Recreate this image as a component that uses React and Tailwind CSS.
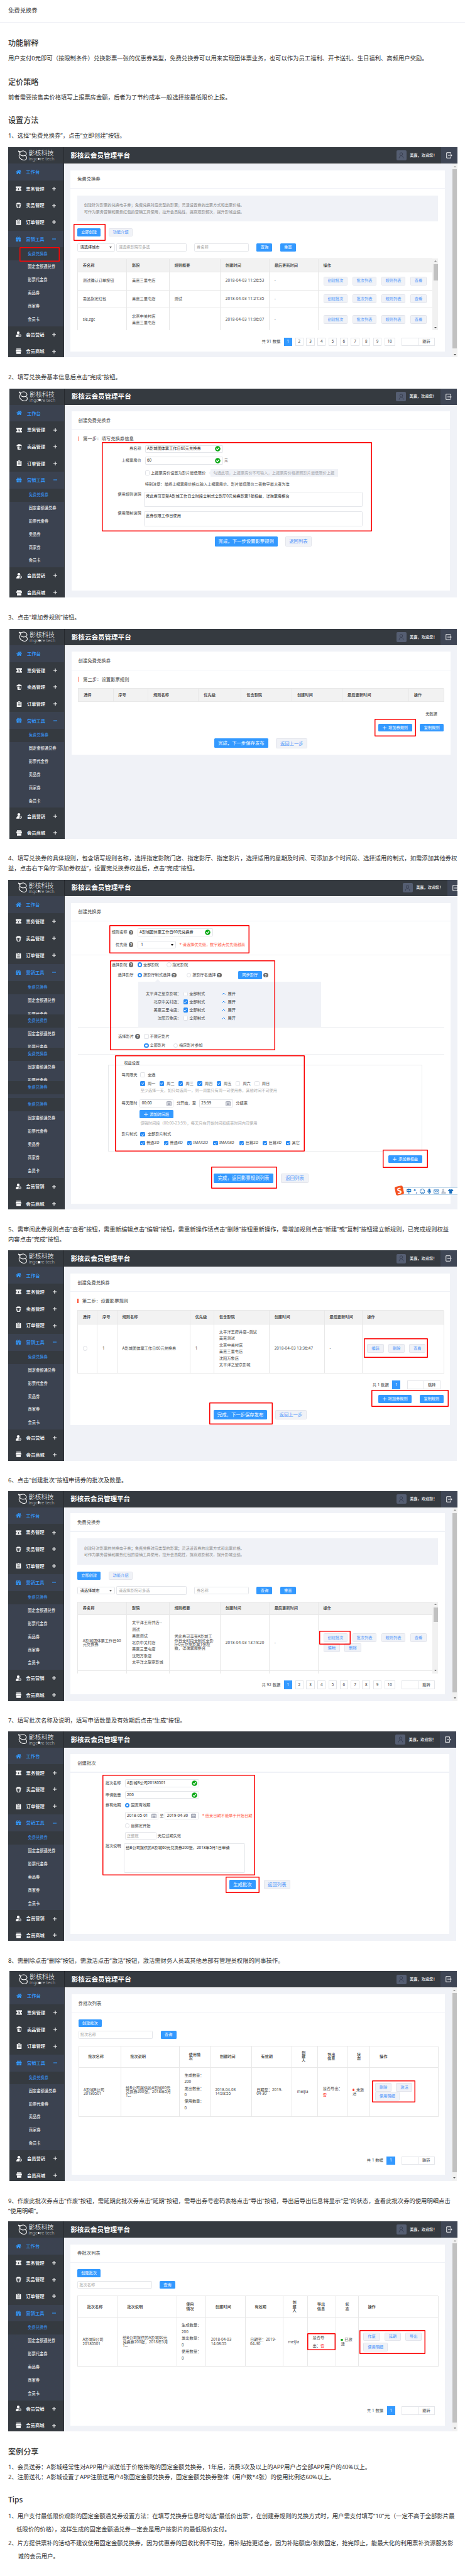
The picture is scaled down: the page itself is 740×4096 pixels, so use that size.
import React from "react";
import clsx from "clsx";
import { FaHome, FaGift, FaMicrophone, FaTshirt, FaRegSmile, FaRegKeyboard } from "react-icons/fa";

/* ---------- icons ---------- */

function TicketIcon() {
  return (
    <svg viewBox="0 0 18 16" className="h-[8px] w-[9px]">
      <path fill="#fff" fillRule="evenodd" d="M0 1h18v4a3 3 0 0 0 0 6v4H0v-4a3 3 0 0 0 0-6z" />
      <path fill="none" stroke="#353a40" strokeWidth="1.4" d="M6.3 4.5 9 8l2.7-3.5M9 8v4.5M6.5 8.5h5M6.5 10.5h5" />
    </svg>
  );
}

function PopcornIcon() {
  return (
    <svg viewBox="0 0 18 18" className="h-[9px] w-[9px]">
      <path fill="#fff" d="M1 6a3 3 0 0 1 3-3.5 3.5 3.5 0 0 1 5-1.5 3.5 3.5 0 0 1 5 1.5A3 3 0 0 1 17 6z" />
      <path fill="none" stroke="#fff" strokeWidth="1.8" d="M2.3 6.5 4.5 17h9l2.2-10.5M7 7v10M11 7v10" />
    </svg>
  );
}

function OrderIcon() {
  return (
    <svg viewBox="0 0 18 18" className="h-[9px] w-[9px]">
      <path fill="#fff" d="M1.5 2h4V.5h7V2h4v16h-15z" />
      <path fill="none" stroke="#353a40" strokeWidth="1.3" d="M5.5 2v2.5h7V2M4.5 8h9M4.5 11h9M4.5 14h9" />
    </svg>
  );
}

function MemberIcon() {
  return (
    <svg viewBox="0 0 18 18" className="h-[9px] w-[9px]">
      <circle cx="8" cy="4.5" r="4.3" fill="#fff" />
      <path fill="#fff" d="M0 17.5C0 12 3 10 5.5 9.5h5C8.5 12 8 15 10 17.5z" />
      <circle cx="13.5" cy="13.3" r="3.6" fill="none" stroke="#fff" strokeWidth="1.7" />
      <path d="m12 13.5 1.2 1.2 2-2.4" fill="none" stroke="#fff" strokeWidth="1.2" />
    </svg>
  );
}

function ShopIcon() {
  return (
    <svg viewBox="0 0 18 18" className="h-[9px] w-[9px]">
      <path fill="#fff" d="M2 .5h14V3H2zM1 4h16l1 4.5H0zM2 10.5h14v7H2z" />
      <path fill="none" stroke="#fff" strokeWidth="1.6" d="M0 8.5q2.2 3 4.5 0 2.2 3 4.5 0 2.2 3 4.5 0 2.2 3 4.5 0" />
    </svg>
  );
}

function LogoMark() {
  return (
    <svg viewBox="0 0 34 36" className="h-[17px] w-[16.5px] shrink-0" fill="none" stroke="#fff" strokeWidth="2.2">
      <path d="M2 2c3 3 6 2 9 1.500C16 1 24 1 28 8c3 5 0 9-5 10C15 20 10 17 8 14" />
      <path d="M2 2c1 3 3 5 6 6M9 7C2 15 3 24 10 29c8 6 19 5 20-3 .5-5-2-8-7-8" />
    </svg>
  );
}

function LogoutIcon() {
  return (
    <svg viewBox="0 0 20 20" className="h-[10px] w-[10px]" fill="none" stroke="#fff" strokeWidth="1.9">
      <path d="M15 5V1.5H1.5v17H15V15M6 10h12M14.5 6l4 4-4 4" />
    </svg>
  );
}

function Check() {
  return (
    <svg viewBox="0 0 20 20" className="h-[9px] w-[9px] shrink-0">
      <circle cx="10" cy="10" r="9.5" fill="#0aa815" />
      <path d="m5 9.8 3.8 4L15.3 6" fill="none" stroke="#fff" strokeWidth="2.8" />
    </svg>
  );
}

function Calendar() {
  return (
    <svg viewBox="0 0 18 18" className="h-[8.5px] w-[8px] shrink-0" fill="none" stroke="#777d92" strokeWidth="1.5">
      <path d="M1 3.5h16V17H1zM1 6h16M5 1v3M9 1v3M13 1v3M5 9v6M9 9v6M13 9v6M3.5 10.5h11M3.5 13.5h11" />
    </svg>
  );
}

function Help({ className }) {
  return (
    <span
      className={clsx(
        "flex h-[7.5px] w-[7.5px] shrink-0 items-center justify-center rounded-full bg-[#6b6b6b] text-[6px] leading-none font-bold text-white",
        className
      )}
    >
      ?
    </span>
  );
}

function Plus() {
  return (
    <svg viewBox="0 0 12 12" className="mr-[2.5px] h-[6.5px] w-[6.5px]" stroke="#fff" strokeWidth="1.8">
      <path d="M6 0v12M0 6h12" />
    </svg>
  );
}

/* ---------- controls ---------- */

function Primary({ className, children }) {
  return (
    <span className={clsx("flex shrink-0 items-center justify-center rounded-[1.5px] bg-[#3399ff] whitespace-nowrap text-white", className)}>
      {children}
    </span>
  );
}

function Ghost({ className, children }) {
  return (
    <span
      className={clsx(
        "flex shrink-0 items-center justify-center rounded-[1.5px] border border-[#e3e5ec] bg-[#f0f2f7] whitespace-nowrap text-[#4a92fb]",
        className
      )}
    >
      {children}
    </span>
  );
}

function Input({ className, children, icon, muted }) {
  return (
    <span
      className={clsx(
        "flex shrink-0 items-center rounded-[1.5px] border border-[#e4e6ea] bg-white pr-[2.5px] pl-[2.3px] whitespace-nowrap",
        muted ? "text-[#a5a5a5]" : "text-[#222]",
        className
      )}
    >
      <span className="flex-1">{children}</span>
      {icon}
    </span>
  );
}

function Radio({ on, className }) {
  return (
    <span
      className={clsx(
        "h-[7.5px] w-[7.5px] shrink-0 rounded-full bg-white",
        on ? "border-[2.4px] border-[#2b8cf5]" : "border border-[#dcdee3]",
        className
      )}
    />
  );
}

function Box({ on, className }) {
  return (
    <span
      className={clsx(
        "flex h-[7.5px] w-[7.5px] shrink-0 items-center justify-center rounded-[1.5px]",
        on ? "bg-[#2b8cf5]" : "border border-[#dfe1e6] bg-white",
        className
      )}
    >
      {on && (
        <svg viewBox="0 0 12 12" className="h-[6px] w-[6px]" fill="none" stroke="#fff" strokeWidth="2">
          <path d="m2 6 3 3 5-6" />
        </svg>
      )}
    </span>
  );
}

function Row({ className, children }) {
  return <div className={clsx("flex h-[12px] items-center whitespace-nowrap", className)}>{children}</div>;
}

function Mark({ className }) {
  return <div className={clsx("pointer-events-none absolute rounded-[1px] shadow-[inset_0_0_0_1.5px_#fb0505]", className)} />;
}

function Scrollbar({ className, thumb }) {
  return (
    <div className={clsx("flex shrink-0 flex-col items-center bg-[#f1f1f1]", className)}>
      <div className="flex h-[9px] items-center">
        <span className="border-x-[2px] border-b-[2.5px] border-x-transparent border-b-[#8b8b8b]" />
      </div>
      <div className={clsx("w-[7px] bg-[#c1c1c1]", thumb)} />
      <div className="flex-1" />
      <div className="flex h-[9px] items-center">
        <span className="border-x-[2px] border-t-[2.5px] border-x-transparent border-t-[#505050]" />
      </div>
    </div>
  );
}

function Pager({ total, pages, className }) {
  return (
    <div className={clsx("flex h-[13.6px] items-center justify-end text-[#444]", className)}>
      <span className="mr-[5.5px] tracking-[0.1px]">共 {total} 数据</span>
      {pages.map((p, i) => (
        <span
          key={p}
          className={clsx(
            "mr-[4.6px] flex h-[13.6px] items-center justify-center",
            p === 10 ? "w-[17px]" : "w-[13.2px]",
            i === 0 ? "bg-[#3399ff] text-white" : "border border-[#e4e6ea]"
          )}
        >
          {p}
        </span>
      ))}
      <span className="ml-[5.6px] h-[13.6px] w-[27px] border border-[#e4e6ea]" />
      <span className="flex h-[13.6px] w-[26px] items-center justify-center border border-l-0 border-[#e4e6ea]">跳转</span>
    </div>
  );
}

/* ---------- console frame ---------- */

function MenuItem({ icon, label, sign, active, className }) {
  return (
    <div className={clsx("flex items-center", active ? "bg-[#3b4250] text-[#3399ff]" : "bg-[#353a40] text-white", className)}>
      <span className="ml-[11.5px] flex w-[9px] justify-center">{icon}</span>
      <span className="ml-[7.8px] w-[42px] text-[7.3px] font-medium whitespace-nowrap">{label}</span>
      {sign && (
        <svg viewBox="0 0 12 12" className="h-[6px] w-[6px]" stroke="currentColor" strokeWidth="2.2">
          <path d={sign === "+" ? "M6 0v12M0 6h12" : "M0 6h12"} />
        </svg>
      )}
    </div>
  );
}

function SubItem({ label, active, row, clip }) {
  return (
    <div className={clsx("overflow-hidden", clip ? "h-[10.6px]" : row)}>
      <div className={clsx("flex items-center pl-[31.2px] text-[6.25px] whitespace-nowrap", row, active ? "bg-[#353a40] text-[#3a96f8]" : "bg-[#3b4250] text-white")}>
        {label}
      </div>
    </div>
  );
}

const SUBS = ["免费兑换券", "固定金额通兑券", "影票代金券", "卖品券", "商家券", "会员卡"];

function Sidebar({ stitched }) {
  const item = stitched ? "h-[27.05px]" : "h-[26.65px]";
  const sub = stitched ? "h-[21.2px]" : "h-[20.9px]";
  return (
    <nav className={clsx("shrink-0 border-r border-[#2b2f35] bg-[#353a40]", stitched ? "w-[90px]" : "w-[88.7px]")}>
      <MenuItem className={item} active label="工作台" icon={<FaHome className="h-[9px] w-[9px]" />} />
      <MenuItem className={item} label="票务管理" sign="+" icon={<TicketIcon />} />
      <MenuItem className={item} label="卖品管理" sign="+" icon={<PopcornIcon />} />
      <MenuItem className={item} label="订单管理" sign="+" icon={<OrderIcon />} />
      <MenuItem className={item} active label="营销工具" sign="-" icon={<FaGift className="h-[8.5px] w-[8.5px]" />} />
      {stitched && (
        <>
          {[0, 1, 2].map((n) => (
            <div key={n}>
              <SubItem row={sub} active label={SUBS[0]} />
              <SubItem row={sub} label={SUBS[1]} />
              <SubItem row={sub} clip label={SUBS[2]} />
            </div>
          ))}
          <SubItem row={sub} active label={SUBS[0]} />
          <div className="h-[6.2px] bg-[#3b4250]" />
        </>
      )}
      {SUBS.map((s, i) => (
        <SubItem key={s} row={sub} active={i === 0} label={s} />
      ))}
      <MenuItem className={item} label="会员营销" sign="+" icon={<MemberIcon />} />
      <MenuItem className={item} label="会员商城" sign="+" icon={<ShopIcon />} />
    </nav>
  );
}

function Console({ className, title, card, top = "pt-[9.5px]", scroll, stitched, marks, children }) {
  return (
    <div className={clsx("relative flex flex-col overflow-hidden bg-[#f0f2f7] text-[6.23px] leading-[10.45px] text-[#444]", className)}>
      <header className={clsx("flex h-[26px] shrink-0 items-center bg-[#353a40] text-white", stitched && "w-[724.5px]")}>
        <div className={clsx("flex h-[26px] shrink-0 items-center border-r border-[#25282d] pl-[14.5px]", stitched ? "w-[90px]" : "w-[88.7px]")}>
          <LogoMark />
          <div className="ml-[1.5px] flex flex-col">
            <span className="text-[10px] leading-[10px] font-light whitespace-nowrap">影核科技</span>
            <span className="flex items-center text-[7.3px] leading-[8px] font-light whitespace-nowrap text-[#c2c4c8]">
              ingc
              <i className="mx-[0.3px] mt-[1px] h-[3.6px] w-[3.6px] rounded-full bg-white" />
              re tech
            </span>
          </div>
        </div>
        <h4 className="ml-[10.5px] text-[10.55px] font-bold whitespace-nowrap">影核云会员管理平台</h4>
        <div className="flex-1" />
        <div className="mr-[5.5px] flex h-[15.5px] w-[15.6px] items-center justify-center rounded-[2px] bg-[#555e72]">
          <svg viewBox="0 0 16 18" className="h-[10px] w-[9px]" fill="none" stroke="#343a4b" strokeWidth="1.5">
            <circle cx="8" cy="5.5" r="4" />
            <path d="M2 17c0-9 12-9 12 0" />
          </svg>
        </div>
        <span className="mr-[6px] text-[6.2px] font-medium whitespace-nowrap">美嘉，欢迎您！</span>
        <div className="flex h-[26px] w-[26px] shrink-0 items-center justify-center bg-[#3f4655]">
          <LogoutIcon />
        </div>
      </header>
      <div className="flex min-h-0 flex-1">
        <Sidebar stitched={stitched} />
        <main className={clsx("min-w-0 flex-1 border-t border-white pl-[10.4px]", top)}>
          <section className={clsx("overflow-hidden bg-white", card)}>
            <h5 className="flex h-[28.2px] items-center pl-[10.9px] text-[7.35px]">{title}</h5>
            <div className="h-[1.2px] bg-[#f0f2f7]" />
            {children}
          </section>
        </main>
        {scroll && <Scrollbar className="w-[8px]" thumb="flex-[60]" />}
      </div>
      {marks}
    </div>
  );
}

function StepTitle({ children }) {
  return (
    <div className="mt-[8.2px] flex h-[12px] items-center pl-[10.9px] text-[7.35px]">
      <span className="mr-[6px] h-[7.5px] w-[1.5px] bg-[#ff4a2a]" />
      {children}
    </div>
  );
}

/* ---------- coupon list ---------- */

const LIST_COLS = "grid grid-cols-[78.3px_67.5px_81.2px_77.9px_77.9px_182.6px]";

function Cell({ children, className }) {
  return <div className={clsx("flex min-w-0 items-center border-r border-b border-[#e8e8e8] pl-[7.8px]", className)}>{children}</div>;
}

function CouponList({ total, thumb, children }) {
  return (
    <div className="px-[10.9px]">
      <div className="mt-[10.6px] h-[41.8px] bg-[#f0f2f7] pt-[10.8px] pl-[10.9px] text-[#888]">
        <p className="whitespace-nowrap">创建针对影票的兑换电子券；免费兑换对应类型的影票；灵活设置券的出票方式和出票价格。</p>
        <p className="whitespace-nowrap">可作为票务营销和票务红包的营销工具使用，拉升会员黏性，提高观影频次，提升影城业绩。</p>
      </div>
      <div className="mt-[10.8px] flex h-[13px] items-center gap-[12.7px]">
        <Primary className="h-[12.7px] w-[37.3px]">立即创建</Primary>
        <Ghost className="h-[13.5px] w-[38.2px]">功能介绍</Ghost>
      </div>
      <div className="mt-[10.6px] flex h-[13.2px] items-center">
        <Input className="h-[12.7px] w-[60px] pl-[3.5px]" icon={<span className="mr-[1px] border-x-[2px] border-t-[3px] border-x-transparent border-t-[#666]" />}>
          请选择城市
        </Input>
        <Input className="ml-[2.4px] h-[13.3px] w-[111.8px]" muted>请选择影院可多选</Input>
        <Input className="ml-[11.8px] h-[12.7px] w-[86.8px] pl-[3px]" muted>券名称</Input>
        <Primary className="ml-[12.7px] h-[12.7px] w-[25px]">查询</Primary>
        <Primary className="ml-[12.3px] h-[12.7px] w-[25px]">重置</Primary>
      </div>
      <div className="mt-[10.9px] flex h-[114.2px] overflow-hidden">
        <div className="w-[565.4px] shrink-0 overflow-hidden border-l border-[#e8e8e8]">
          <div className={clsx(LIST_COLS, "h-[21.8px] border-t border-[#e8e8e8] bg-[#f2f2f2] font-medium text-[#333]")}>
            {["券名称", "影院", "规则概要", "创建时间", "最后更新时间", "操作"].map((t) => (
              <Cell key={t}>{t}</Cell>
            ))}
          </div>
          {children}
        </div>
        <Scrollbar className="w-[9.4px]" thumb={thumb} />
      </div>
      <Pager className="mt-[11.5px] pr-[5.2px]" total={total} pages={[1, 2, 3, 4, 5, 6, 7, 8, 9, 10]} />
    </div>
  );
}

function ListActions({ extra }) {
  return (
    <div className="flex flex-wrap gap-x-[7.4px] gap-y-[2.3px]">
      {["创建批次", "批次列表", "规则列表"].map((t) => (
        <Ghost key={t} className="h-[14px] w-[38.7px]">{t}</Ghost>
      ))}
      <Ghost className="h-[14px] w-[26.4px]">查看</Ghost>
      {extra && (
        <>
          <Ghost className="h-[14px] w-[26.4px]">编辑</Ghost>
          <Ghost className="h-[14px] w-[26.4px]">删除</Ghost>
        </>
      )}
    </div>
  );
}

function ListRow({ name, cinemas, summary, time, className, extra }) {
  return (
    <div className={clsx(LIST_COLS, className)}>
      <Cell className="leading-[6.3px] whitespace-nowrap">{name}</Cell>
      <Cell>
        <div>
          {cinemas.map((c) => (
            <p key={c} className="whitespace-nowrap">{c}</p>
          ))}
        </div>
      </Cell>
      <Cell className="leading-[6.3px] whitespace-nowrap">{summary}</Cell>
      <Cell className="tracking-[0.15px] whitespace-nowrap">{time}</Cell>
      <Cell>-</Cell>
      <Cell>
        <ListActions extra={extra} />
      </Cell>
    </div>
  );
}

/* ---------- batch list ---------- */

function BatchList({ cols, heads, cells }) {
  return (
    <div className="px-[10.9px]">
      <Primary className="mt-[10.4px] h-[12.5px] w-[37.3px]">创建批次</Primary>
      <div className="mt-[6.1px] flex items-center gap-[12.4px]">
        <Input className="h-[12.5px] w-[118.6px]" muted>批次名称</Input>
        <Primary className="h-[12.5px] w-[25px]">查询</Primary>
      </div>
      <div className={clsx("mt-[10.8px] grid grid-rows-[34px_78px] border-t border-l border-[#e8e8e8]", cols)}>
        {heads.map((h, i) => (
          <div key={i} className="flex items-center border-r border-b border-[#e8e8e8] pl-[14.6px] leading-[6.3px] font-medium whitespace-pre text-[#333]">
            {h}
          </div>
        ))}
        {cells.map((c, i) => (
          <div key={i} className="flex min-w-0 items-center border-r border-b border-[#e8e8e8] pl-[7.5px] leading-[6.3px] whitespace-pre">
            {c}
          </div>
        ))}
      </div>
      <Pager className="mt-[63px] pr-[5.2px]" total={1} pages={[1]} />
    </div>
  );
}

function Status({ dot, first, rest }) {
  return (
    <div>
      <div className="flex items-center">
        <i className={clsx("mr-[2.5px] h-[3.4px] w-[3.4px] rounded-full", dot)} />
        {first}
      </div>
      <div>{rest}</div>
    </div>
  );
}

const USAGE = (
  <div className="leading-[10.4px]">
    生成数量：{"\n"}200{"\n"}发出数量：{"\n"}0{"\n"}使用数量：{"\n"}0
  </div>
);

/* ---------- article ---------- */

function Heading({ className, children }) {
  return <h2 className={clsx("flex h-[20px] items-center text-[12.1px] font-medium text-[#333]", className)}>{children}</h2>;
}

function Text({ className, children }) {
  return <p className={clsx("text-[9.34px] leading-[16px] whitespace-pre text-[#333]", className)}>{children}</p>;
}

export default function App() {
  return (
    <div className="h-[4096px] w-[740px] overflow-hidden bg-white font-['Noto_Sans','Noto_Sans_CJK_SC',sans-serif]">
      <div className="flex h-[36px] items-center border-b border-[#eef0f6] pl-[13px] text-[9.34px] text-[#333]">免费兑换券</div>
      <div className="pl-[13px]">
        <Heading className="mt-[22.7px]">功能解释</Heading>
        <Text className="mt-[6.2px]">用户支付0元即可（按限制条件）兑换影票一张的优惠券类型，免费兑换券可以用来实现团体票业务，也可以作为员工福利、开卡送礼、生日福利、高频用户奖励。</Text>
        <Heading className="mt-[19.9px]">定价策略</Heading>
        <Text className="mt-[6.4px]">前者需要按售卖价格填写上报票房金额，后者为了节约成本一般选择按最低限价上报。</Text>
        <Heading className="mt-[18.9px]">设置方法</Heading>
        <Text className="mt-[6.3px]">1、选择“免费兑换券”，点击“立即创建”按钮。</Text>

        <Console
          className="mt-[9.75px] h-[334px] w-[714.5px]"
          title="免费兑换券"
          card="h-[288px] w-[596px]"
          scroll
          marks={
            <>
              <Mark className="top-[159.4px] left-[18px] h-[23px] w-[64px]" />
              <Mark className="top-[121.9px] left-[104.3px] h-[27.5px] w-[50.5px]" />
            </>
          }
        >
          <CouponList total={91} thumb="h-[26.5px]">
            <ListRow className="h-[28.9px]" name="测试确认订单按钮" cinemas={["美嘉三里屯店"]} time="2018-04-03 11:26:53" />
            <ListRow className="h-[28.7px]" name="卖品指定红包" cinemas={["美嘉三里屯店"]} summary="测试" time="2018-04-03 11:21:35" />
            <ListRow className="h-[36.5px]" name="sle,zgc" cinemas={["北京中关村店", "美嘉三里屯店"]} time="2018-04-03 11:06:07" />
          </CouponList>
        </Console>

        <Text className="mt-[23.6px]">2、填写兑换券基本信息后点击“完成”按钮。</Text>
        <Console
          className="mt-[9.9px] ml-[1.6px] h-[332.6px] w-[712.2px]"
          title="创建免费兑换券"
          card="h-[284.5px] w-[602.2px]"
          marks={<Mark className="top-[85.5px] left-[147.2px] h-[142px] w-[430.4px]" />}
        >
          <StepTitle>第一步：填写兑换券信息</StepTitle>
          <Row className="mt-[4px]">
            <span className="mr-[6px] w-[111px] text-right">券名称</span>
            <Input className="h-[12.2px] w-[124.1px]" icon={<Check />}>A影城团体票工作日60元兑换券</Input>
          </Row>
          <Row className="mt-[6.8px]">
            <span className="mr-[6px] w-[111px] text-right">上报票房价</span>
            <Input className="h-[12.2px] w-[124.1px]" icon={<Check />}>60</Input>
            <span className="ml-[2px]">元</span>
          </Row>
          <Row className="mt-[7.8px] pl-[117px]">
            <Box />
            <span className="ml-[1.9px]">上报票房价设置为影片最低限价</span>
            <span className="ml-[5px] border-y-[3px] border-r-[3px] border-y-transparent border-r-[#f0f2f7]" />
            <span className="flex h-[12.4px] w-[202.5px] items-center bg-[#f0f2f7] pl-[4.3px] text-[#a3a6ad]">勾选此项，上报票房价不可输入，上报票房价格按照影片最低限价上报</span>
          </Row>
          <Row className="mt-[5.6px] pl-[117px]">特别注意：最终上报票房价格以输入上报票房价、影片最低限价二者数字最大者为准</Row>
          <div className="mt-[6.3px] flex">
            <span className="mt-[-1.5px] mr-[4px] w-[111px] text-right">使用规则说明</span>
            <div className="h-[23.8px] w-[348.3px] rounded-[1.5px] border border-[#e4e6ea] pt-[1px] pl-[2.3px] text-[#222]">凭此券可享受A影城工作日全时段全制式全影厅0元兑换影票1张权益，详询票房柜台</div>
          </div>
          <div className="mt-[7px] flex">
            <span className="mt-[-1.5px] mr-[4px] w-[111px] text-right">使用限制说明</span>
            <div className="h-[23.8px] w-[348.3px] rounded-[1.5px] border border-[#e4e6ea] pt-[1px] pl-[2.3px] text-[#222]">此券仅限工作日使用</div>
          </div>
          <div className="mt-[16.2px] flex gap-[12px] pl-[228px] text-[7.35px]">
            <Primary className="h-[15.6px] w-[100px]">完成，下一步设置影票规则</Primary>
            <Ghost className="h-[15.6px] w-[42.5px]">返回列表</Ghost>
          </div>
        </Console>

        <Text className="mt-[24px]">3、点击“增加券规则”按钮。</Text>
        <Console
          className="mt-[9.7px] ml-[1.6px] h-[333.8px] w-[712.8px]"
          title="创建免费兑换券"
          card="h-[163.6px] w-[603.2px]"
          marks={<Mark className="top-[143.5px] left-[581px] h-[27.5px] w-[66.5px]" />}
        >
          <StepTitle>第二步：设置影票规则</StepTitle>
          <div className="px-[10.7px]">
            <div className="mt-[8.3px] grid h-[21.6px] grid-cols-[55.2px_55.7px_80.2px_68px_80.7px_80.2px_105.7px_56px] border-t border-l border-[#e8e8e8] bg-[#f2f2f2] font-medium text-[#333]">
              {["选择", "序号", "规则名称", "优先级", "包含影院", "创建时间", "最后更新时间", "操作"].map((t) => (
                <Cell key={t}>{t}</Cell>
              ))}
            </div>
            <Row className="mt-[13px] justify-end pr-[10.4px]">无数据</Row>
            <div className="mt-[9.8px] flex justify-end gap-[12.7px]">
              <Primary className="h-[12.8px] w-[53.3px]"><Plus />增加券规则</Primary>
              <Primary className="h-[12.8px] w-[37.8px]">复制规则</Primary>
            </div>
          </div>
          <div className="mt-[10.6px] flex gap-[12.7px] pl-[227.5px] text-[7.35px]">
            <Primary className="h-[15.4px] w-[85.4px]">完成，下一步保存发布</Primary>
            <Ghost className="h-[15.6px] w-[50px]">返回上一步</Ghost>
          </div>
        </Console>

        <Text className="mt-[23.2px]">{"4、填写兑换券的具体规则，包含填写规则名称，选择指定影院门店、指定影厅、指定影片，选择适用的星期及时间、可添加多个时间段、选择适用的制式，如需添加其他券权\n益，点击右下角的“添加券权益”，设置完兑换券权益后，点击“完成”按钮。"}</Text>
        <Console
          className="mt-[9.7px] h-[524.9px] w-[714.5px]"
          title="创建兑换券"
          card="h-[478.2px] w-[604px]"
          top="pt-[10px]"
          stitched
          marks={
            <>
              <Mark className="top-[72.1px] left-[160.5px] h-[45.4px] w-[223.7px]" />
              <Mark className="top-[128px] left-[161.9px] h-[143.8px] w-[262.9px]" />
              <Mark className="top-[279.2px] left-[169.9px] h-[153.3px] w-[302px]" />
              <Mark className="top-[429.9px] left-[596.1px] h-[28.9px] w-[72.2px]" />
              <Mark className="top-[456.6px] left-[323.3px] h-[35.1px] w-[104.8px]" />
              <div className="absolute top-[489.5px] left-[626px] flex h-[12px] w-[100px] items-center gap-[3.6px] border-y border-[#b9d3e8] bg-white pl-[7.5px] text-[#1b6fbe]">
                <span className="text-[8.2px] leading-none font-bold">中</span>
                <span className="text-[8px] leading-none font-bold">°,</span>
                <FaRegSmile className="h-[8.5px] w-[8.5px] shrink-0" />
                <FaMicrophone className="h-[8.5px] w-[6.5px] shrink-0" />
                <FaRegKeyboard className="h-[9px] w-[9px] shrink-0" />
                <svg viewBox="0 0 16 18" className="h-[8.5px] w-[7.5px] shrink-0" fill="#b7bfcc">
                  <circle cx="7" cy="4" r="3.5" />
                  <path d="M1 17c0-8 3-9 6-9s4 1 4.5 2H9v7zM10 11h6v7h-6z" />
                </svg>
                <FaTshirt className="h-[8.5px] w-[8.5px] shrink-0" />
              </div>
              <div className="absolute top-[487.5px] left-[616px] flex h-[14px] w-[13px] -rotate-12 items-center justify-center rounded-[2.5px] bg-[#f4511e] text-[13px] leading-none font-bold text-white">S</div>
            </>
          }
        >
          <Row className="mt-[11.8px]">
            <span className="w-[89.2px] text-right">规则名称</span>
            <Help className="ml-[2.4px]" />
            <Input className="ml-[6.2px] h-[12.6px] w-[120.3px]" icon={<Check />}>A影城团体票工作日60元兑换券</Input>
          </Row>
          <Row className="mt-[7.4px]">
            <span className="w-[89.2px] text-right">优先级</span>
            <Help className="ml-[2.4px]" />
            <Input className="ml-[6.2px] h-[12.6px] w-[60.9px] pl-[4.5px]" icon={<span className="border-x-[2px] border-t-[3.5px] border-x-transparent border-t-black" />}>1</Input>
            <span className="ml-[6px] text-[#ff5a46]">* 请选择优先级，数字越大优先级越高</span>
          </Row>
          <div className="mt-[10.2px] h-px bg-[#f0f1f4]" />
          <Row className="mt-[8.5px]">
            <span className="w-[89.2px] text-right">选择影院</span>
            <Help className="ml-[2.4px]" />
            <Radio on className="ml-[6.2px]" />
            <span className="ml-[1.8px]">全部影院</span>
            <Radio className="ml-[12.2px]" />
            <span className="ml-[1.8px]">指定影院</span>
          </Row>
          <Row className="mt-[4.8px]">
            <span className="w-[99.1px] text-right">选择影厅</span>
            <Radio on className="ml-[6.2px]" />
            <span className="ml-[1.8px]">按影厅制式选择</span>
            <Help className="ml-[1.7px]" />
            <Radio className="ml-[16px]" />
            <span className="ml-[2px]">按影厅名选择</span>
            <Help className="ml-[1.5px]" />
            <Primary className="ml-[26.3px] h-[13px] w-[37.8px]">同步影厅</Primary>
            <Help className="ml-[2.5px]" />
          </Row>
          <div className="pl-[134px]">
            <div className="h-[4px] w-[8px] border-x-[4px] border-b-[4px] border-x-transparent border-b-[#f0f2f7]" />
          </div>
          <div className="ml-[106.2px] h-[72px] w-[291.7px] bg-[#f0f2f7] pt-[13.4px]">
            {[
              ["太平洋之望京影城", false],
              ["北京中关村店", true],
              ["美嘉三里屯店", true],
              ["沈阳万象店", false],
            ].map(([name, on]) => (
              <div key={name} className="flex h-[12.8px] items-center whitespace-nowrap">
                <span className="w-[68.5px] text-right">{name}：</span>
                <Box on={on} className="ml-[3.5px]" />
                <span className="ml-[2.2px] w-[52px]">全部制式</span>
                <svg viewBox="0 0 12 8" className="h-[4px] w-[6px]" fill="none" stroke="#2b8cf5" strokeWidth="2">
                  <path d="m1 7 5-5 5 5" />
                </svg>
                <span className="ml-[3.3px]">展开</span>
              </div>
            ))}
          </div>
          <div className="mx-[10.9px] h-px bg-[#eff0f3]" />
          <Row className="mt-[8.5px]">
            <span className="w-[99.6px] text-right">选择影片</span>
            <Help className="ml-[2.4px]" />
            <Box className="ml-[6.2px]" />
            <span className="ml-[2px]">不限定影片</span>
          </Row>
          <Row className="mt-[2.4px] pl-[115.7px]">
            <Radio on />
            <span className="ml-[2px]">全部影片</span>
            <Radio className="ml-[12.2px]" />
            <span className="ml-[2px]">指定影片参加</span>
          </Row>
          <div className="mx-[10.9px] mt-[7.5px] h-px bg-[#eff0f3]" />
          <Row className="mt-[7.7px] pl-[84px]">权益设置</Row>
          <div className="mt-[-3.2px] ml-[59px] h-[138px] w-[499.8px] border border-[#e8eaec]">
            <Row className="mt-[8.3px]">
              <span className="w-[45px] text-right">每周限天</span>
              <Box className="ml-[5px]" />
              <span className="ml-[4px]">全选</span>
            </Row>
            <Row className="mt-[2px] pl-[50px]">
              {["周一", "周二", "周三", "周四", "周五", "周六", "周日"].map((d, i) => (
                <span key={d} className="flex w-[30.3px] items-center">
                  <Box on={i < 5} />
                  <span className="ml-[4px]">{d}</span>
                </span>
              ))}
            </Row>
            <Row className="mt-[-0.5px] pl-[50px] text-[#aaa]">至少选择一天，如只勾选周一，则一周里只有周一可使用券，其他时间不可使用</Row>
            <Row className="mt-[8px]">
              <span className="mr-[4px] w-[45px] text-right">每天限时</span>
              <Input className="h-[12.5px] w-[53.8px]" icon={<Calendar />}>00:00</Input>
              <span className="ml-[4.7px] w-[36px]">分开始，至</span>
              <Input className="h-[12.5px] w-[53.8px]" icon={<Calendar />}>23:59</Input>
              <span className="ml-[4.7px]">分结束</span>
            </Row>
            <Primary className="mt-[5.2px] ml-[49px] h-[12.8px] w-[53.8px]"><Plus />添加时间段</Primary>
            <Row className="mt-[1.8px] pl-[50px] text-[#aaa]">促销时间段（00:00-23:59），每天只在开始时间和结束时间内可使用</Row>
            <Row className="mt-[5.5px]">
              <span className="w-[45px] text-right">影片制式</span>
              <Box on className="ml-[5px]" />
              <span className="ml-[4px]">全部影片制式</span>
            </Row>
            <Row className="mt-[2px] pl-[50px]">
              {[
                ["普通2D", "w-[37.3px]"],
                ["普通3D", "w-[37.3px]"],
                ["IMAX2D", "w-[41.5px]"],
                ["IMAX3D", "w-[41.5px]"],
                ["巨幕2D", "w-[37px]"],
                ["巨幕3D", "w-[37px]"],
                ["其它", "w-[30px]"],
              ].map(([t, w]) => (
                <span key={t} className={clsx("flex shrink-0 items-center", w)}>
                  <Box on />
                  <span className="ml-[2px]">{t}</span>
                </span>
              ))}
            </Row>
          </div>
          <div className="mt-[5.5px] flex w-[558.8px] justify-end">
            <Primary className="h-[12.5px] w-[54.3px]"><Plus />添加券权益</Primary>
          </div>
          <div className="mt-[16.4px] flex gap-[12.3px] pl-[227px] text-[7.45px]">
            <Primary className="h-[15.4px] w-[94.4px]">完成，返回影票规则列表</Primary>
            <Ghost className="h-[15.6px] w-[43.9px]">返回列表</Ghost>
          </div>
        </Console>

        <Text className="mt-[23.8px]">{"5、需审阅此券规则点击“查看”按钮，需重新编辑点击“编辑”按钮，需重新操作请点击“删除”按钮重新操作，需增加规则点击“新建”或“复制”按钮建立新规则，已完成规则权益\n内容点击“完成”按钮。"}</Text>
        <Console
          className="mt-[9.2px] ml-[0.3px] h-[334.2px] w-[714px]"
          title="创建免费兑换券"
          card="h-[241.5px] w-[604.1px]"
          marks={
            <>
              <Mark className="top-[139.9px] left-[565.4px] h-[30.9px] w-[102.4px]" />
              <Mark className="top-[221.1px] left-[577.7px] h-[27.3px] w-[122.7px]" />
              <Mark className="top-[241.7px] left-[319.5px] h-[35px] w-[101.5px]" />
            </>
          }
        >
          <StepTitle>第二步：设置影票规则</StepTitle>
          <div className="px-[10.7px]">
            <div className="mt-[8.3px] grid grid-cols-[31.1px_31.6px_116.1px_38.2px_87.8px_87.8px_59.9px_130px] grid-rows-[21.9px_78.1px] border-t border-l border-[#e8e8e8]">
              {["选择", "序号", "规则名称", "优先级", "包含影院", "创建时间", "最后更新时间", "操作"].map((t) => (
                <Cell key={t} className="bg-[#f2f2f2] font-medium whitespace-nowrap text-[#333]">{t}</Cell>
              ))}
              <Cell><Radio /></Cell>
              <Cell>1</Cell>
              <Cell className="whitespace-nowrap">A影城团体票工作日60元兑换券</Cell>
              <Cell>1</Cell>
              <Cell className="whitespace-pre">{"太平洋王府井店--测试\n美嘉测试\n北京中关村店\n美嘉三里屯店\n沈阳万象店\n太平洋之望京影城"}</Cell>
              <Cell className="tracking-[0.15px] whitespace-nowrap">2018-04-03 13:36:47</Cell>
              <Cell>-</Cell>
              <Cell className="gap-[7px]">
                {["编辑", "删除", "查看"].map((t) => (
                  <Ghost key={t} className="h-[13.9px] w-[26.4px]">{t}</Ghost>
                ))}
              </Cell>
            </div>
            <Pager className="mt-[11.5px] pr-[5.2px]" total={1} pages={[1]} />
            <div className="mt-[9.3px] flex justify-end gap-[12.7px]">
              <Primary className="h-[12.8px] w-[53.3px]"><Plus />增加券规则</Primary>
              <Primary className="h-[12.8px] w-[37.8px]">复制规则</Primary>
            </div>
          </div>
          <div className="mt-[10.7px] flex gap-[12.7px] pl-[227.5px] text-[7.35px]">
            <Primary className="h-[15.4px] w-[85.4px]">完成，下一步保存发布</Primary>
            <Ghost className="h-[15.6px] w-[50px]">返回上一步</Ghost>
          </div>
        </Console>

        <Text className="mt-[23.7px]">6、点击“创建批次”按钮申请券的批次及数量。</Text>
        <Console
          className="mt-[8.3px] h-[334.1px] w-[714.5px]"
          title="免费兑换券"
          card="h-[288px] w-[596px]"
          top="pt-[8.7px]"
          scroll
          marks={<Mark className="top-[222.3px] left-[494.6px] h-[22px] w-[50px]" />}
        >
          <CouponList total={92} thumb="h-[23.7px]">
            <ListRow
              className="h-[88.3px]"
              name={<>A影城团体票工作日60<br />元兑换券</>}
              cinemas={["太平洋王府井店--", "测试", "美嘉测试", "北京中关村店", "美嘉三里屯店", "沈阳万象店", "太平洋之望京影城"]}
              summary={<>凭此券可享受A影城工<br />作日全时段全制式全影<br />厅0元兑换影票1张权<br />益，详询票房柜台</>}
              time="2018-04-03 13:19:20"
              extra
            />
            <div className={clsx(LIST_COLS, "h-[6px]")}>
              {[0, 1, 2, 3, 4, 5].map((n) => (
                <Cell key={n} />
              ))}
            </div>
          </CouponList>
        </Console>

        <Text className="mt-[23.1px]">7、填写批次名称及说明，填写申请数量及有效期后点击“生成”按钮。</Text>
        <Console
          className="mt-[9px] ml-[0.3px] h-[333.7px] w-[712.5px]"
          title="创建批次"
          card="h-[285.4px] w-[602.7px]"
          marks={
            <>
              <Mark className="top-[69.6px] left-[150.1px] h-[159.8px] w-[243px]" />
              <Mark className="top-[231.1px] left-[345.5px] h-[26.4px] w-[54.7px]" />
            </>
          }
        >
          <Row className="mt-[10.7px]">
            <span className="mr-[6.2px] w-[80.2px] text-right">批次名称</span>
            <Input className="h-[12.4px] w-[118.5px]" icon={<Check />}>A影城B公司20180501</Input>
          </Row>
          <Row className="mt-[6.9px]">
            <span className="mr-[6.2px] w-[80.2px] text-right">申请数量</span>
            <Input className="h-[12.4px] w-[118.5px]" icon={<Check />}>200</Input>
          </Row>
          <Row className="mt-[4.2px]">
            <span className="mr-[6.2px] w-[80.2px] text-right">券有效期</span>
            <Radio on />
            <span className="ml-[2px]">固定有效期</span>
          </Row>
          <Row className="mt-[4.5px] pl-[86.4px]">
            <Input className="h-[12.4px] w-[53.3px] tracking-[0.1px]" icon={<Calendar />}>2018-05-01</Input>
            <span className="mx-[2.1px]">至</span>
            <Input className="h-[12.4px] w-[53.3px] tracking-[0.1px]" icon={<Calendar />}>2019-04-30</Input>
            <span className="ml-[6px] text-[#ff5a46]">* 结束日期不能早于开始日期</span>
          </Row>
          <Row className="mt-[4px] pl-[86.4px]">
            <Radio />
            <span className="ml-[2px]">自绑定开始</span>
          </Row>
          <Row className="mt-[4px] pl-[86.4px]">
            <Input className="h-[12.4px] w-[50px]" muted>正整数</Input>
            <span className="ml-[2px]">天后过期失效</span>
          </Row>
          <div className="mt-[6.3px] flex">
            <span className="mt-[-1.5px] mr-[4.3px] w-[80.2px] text-right">批次说明</span>
            <div className="h-[47px] w-[193px] rounded-[1.5px] border border-[#e4e6ea] pt-[0.8px] pl-[2.3px] whitespace-nowrap text-[#222]">给B公司提供的A影城60元兑换券200张，2018年5月1日申请</div>
          </div>
          <div className="mt-[10.6px] flex gap-[12.7px] pl-[252.5px] text-[7.35px]">
            <Primary className="h-[15.5px] w-[42px]">生成批次</Primary>
            <Ghost className="h-[15.5px] w-[42.5px]">返回列表</Ghost>
          </div>
        </Console>

        <Text className="mt-[23.1px]">8、需删除点击“删除”按钮，需激活点击“激活”按钮，激活需财务人员或其他总部有管理员权限的同事操作。</Text>
        <Console
          className="mt-[8.8px] ml-[1.6px] h-[333.4px] w-[712.8px]"
          title="券批次列表"
          card="h-[287.2px] w-[594.2px]"
          scroll
          marks={<Mark className="top-[173.7px] left-[577.2px] h-[35.1px] w-[68.9px]" />}
        >
          <BatchList
            cols="grid-cols-[67px_93.4px_49.1px_65.6px_64.7px_41px_47.2px_35.9px_108.5px]"
            heads={["批次名称", "批次说明", "使用情\n况", "创建时间", "有效期", "创\n建\n人", "导出\n信息", "状\n态", "操作"]}
            cells={[
              "A影城B公司\n20180501",
              "给B公司提供的A影城60元\n兑换券200张，2018年5月\n1...",
              USAGE,
              "2018-04-03\n14:08:55",
              "日期至：2019-\n04-30",
              "meijia",
              <div className="leading-[10.4px]">是否导出：{"\n"}<span className="text-[#ff2b2b]">否</span></div>,
              <Status dot="bg-[#ff3b2b]" first="未激" rest="活" />,
              <div className="flex w-[90px] flex-wrap gap-x-[7.5px]">
                <Ghost className="h-[13.6px] w-[26px]">删除</Ghost>
                <Ghost className="h-[13.6px] w-[26px]">激活</Ghost>
                <Ghost className="h-[13.6px] w-[38.7px]">使用明细</Ghost>
              </div>,
            ]}
          />
        </Console>

        <Text className="mt-[23.8px]">{"9、作废此批次券点击“作废”按钮，需延期此批次券点击“延期”按钮，需导出券号密码表格点击“导出”按钮，导出后导出信息将显示“是”的状态，查看此批次券的使用明细点击\n“使用明细”。"}</Text>
        <Console
          className="mt-[8.5px] h-[333.9px] w-[714.5px]"
          title="券批次列表"
          card="h-[288px] w-[596px]"
          scroll
          marks={
            <>
              <Mark className="top-[178.1px] left-[475.7px] h-[26.6px] w-[45.8px]" />
              <Mark className="top-[172.6px] left-[559.3px] h-[38px] w-[105.2px]" />
            </>
          }
        >
          <BatchList
            cols="grid-cols-[63.7px_93.9px_46.7px_62.3px_60.4px_39.2px_44.8px_35.9px_127.4px]"
            heads={["批次名称", "批次说明", "使用\n情况", "创建时间", "有效期", "创\n建\n人", "导出\n信息", "状\n态", "操作"]}
            cells={[
              "A影城B公司\n20180501",
              "给B公司提供的A影城60元\n兑换券200张，2018年5月\n1...",
              USAGE,
              "2018-04-03\n14:08:55",
              "日期至：2019-\n04-30",
              "meijia",
              <div className="leading-[12.6px]">是否导{"\n"}出：<span className="text-[#ff2b2b]">否</span></div>,
              <Status dot="bg-[#0aa815]" first="已激" rest="活" />,
              <div className="flex w-[110px] flex-wrap gap-x-[7px] gap-y-[2.5px]">
                <Ghost className="h-[13.8px] w-[26.4px]">作废</Ghost>
                <Ghost className="h-[13.8px] w-[26.4px]">延期</Ghost>
                <Ghost className="h-[13.8px] w-[26.4px]">导出</Ghost>
                <Ghost className="h-[13.8px] w-[38.7px]">使用明细</Ghost>
              </div>,
            ]}
          />
        </Console>

        <Heading className="mt-[23.3px]">案例分享</Heading>
        <Text className="mt-[5.8px]">1、会员送券：A影城经常性对APP用户派送低于价格策略的固定金额兑换券，1年后，消费3次及以上的APP用户占全部APP用户的40%以上。</Text>
        <Text>2、注册送礼：A影城设置了APP注册送用户4张固定金额兑换券，固定金额兑换券整体（用户数*4张）的使用比例达60%以上。</Text>
        <Heading className="mt-[18.5px]">Tips</Heading>
        <div className="mt-[4.7px]">
          <Text className="h-[21.4px] pt-[2.7px]">1、用户支付最低限价观影的固定金额通兑券设置方法：在填写兑换券信息时勾选“最低价出票”，在创建券规则的兑换方式时，用户需支付填写“10”元（一定不高于全部影片最</Text>
          <Text className="h-[21.4px] pt-[2.7px] pl-[13px]">低限价的价格），这样生成的固定金额通兑券一定会是用户按影片的最低限价支付。</Text>
          <Text className="h-[21.4px] pt-[2.7px]">2、片方提供票补的活动不建议使用固定金额兑换券，因为优惠券的回收比例不可控，用补贴抢更适合，因为补贴额度/张数固定，抢完即止，能最大化的利用票补资源服务影</Text>
          <Text className="h-[21.4px] pt-[2.7px] pl-[15.5px]">城的会员用户。</Text>
        </div>
      </div>
    </div>
  );
}
